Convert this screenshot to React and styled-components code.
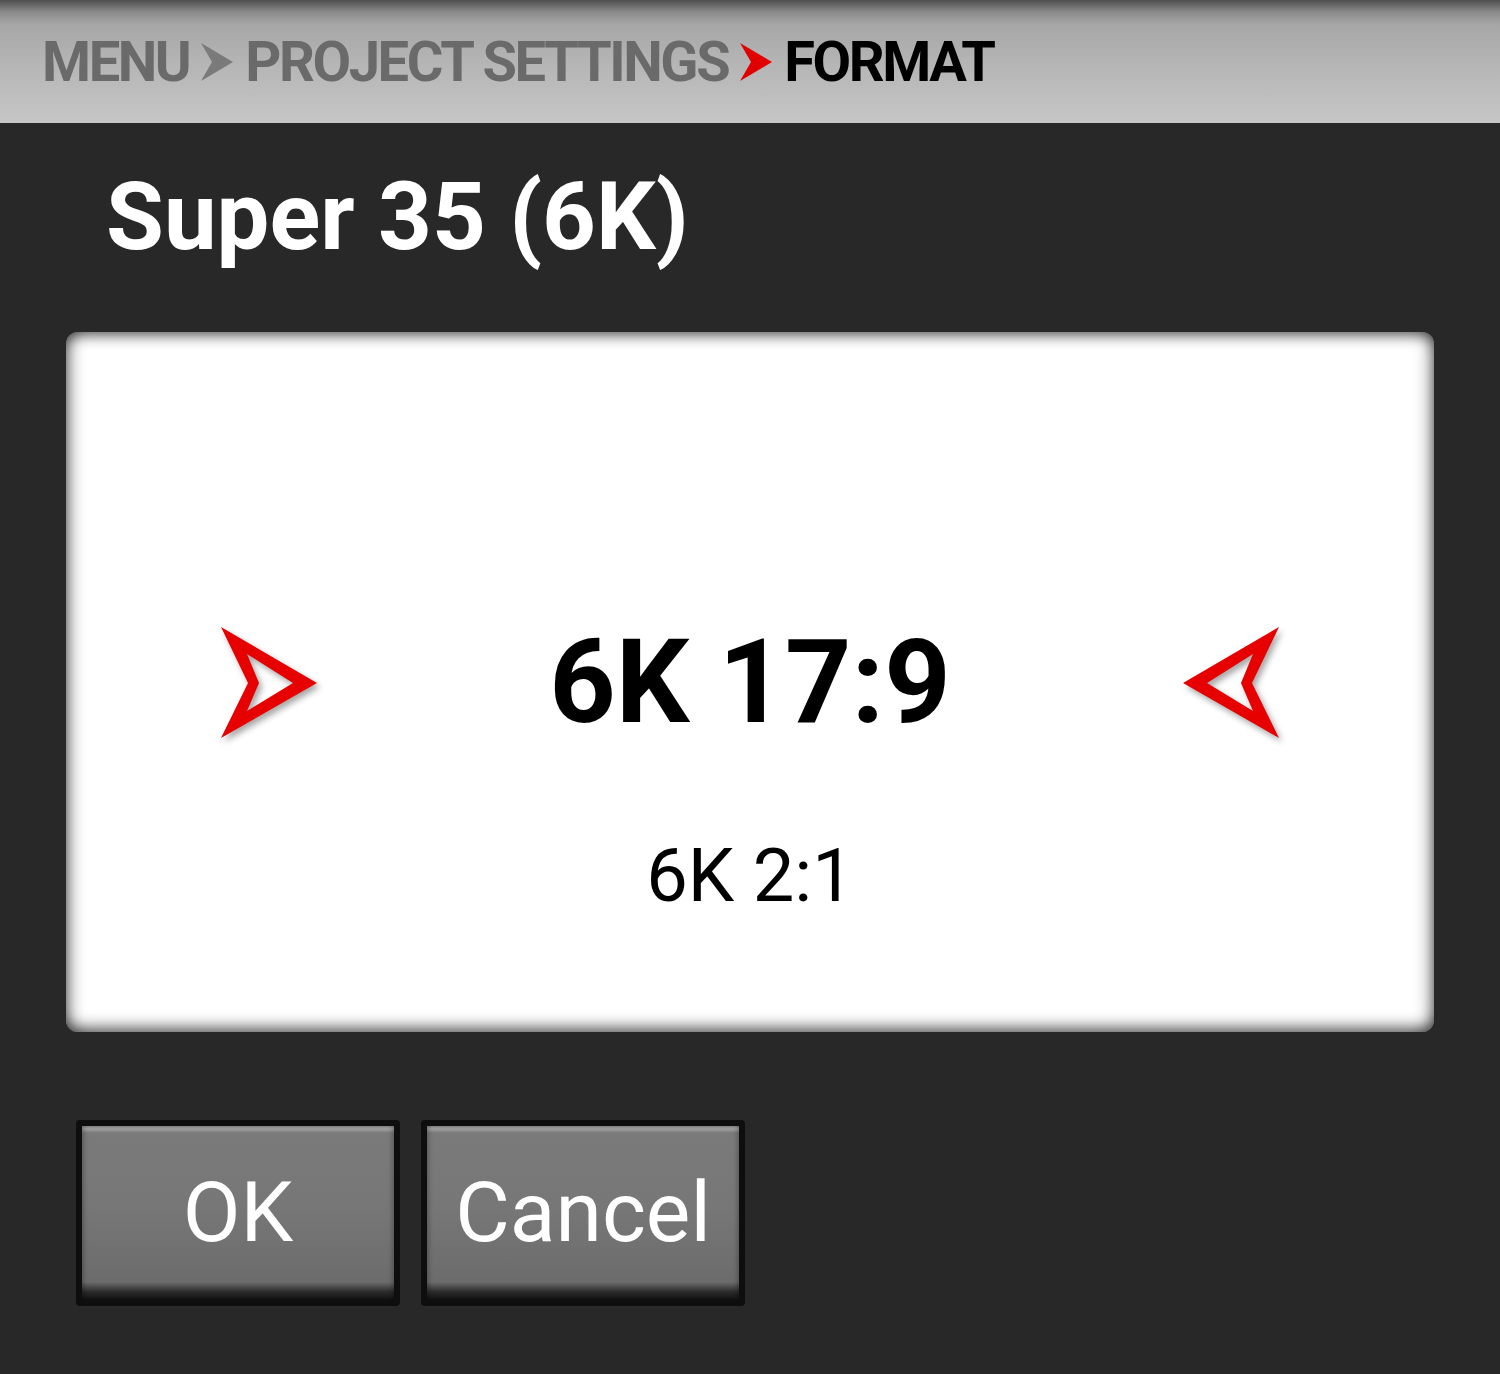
import styled, { createGlobalStyle } from "styled-components";

const GlobalStyle = createGlobalStyle`
    html, body {
        margin: 0;
        padding: 0;
        background: #282828;
    }

    body {
        font-family: Roboto, "Liberation Sans", sans-serif;
    }
`;

const Screen = styled.div`
    width: 1500px;
    height: 1374px;
    background: #282828;
    display: flex;
    flex-direction: column;
    overflow: hidden;
`;

const Header = styled.div`
    height: 123px;
    display: flex;
    align-items: center;
    padding: 0 0 0 42px;
    gap: 12px;
    box-sizing: border-box;
    background: linear-gradient(
        to bottom,
        #4e4e4e 0px,
        #8a8a8a 12px,
        #a6a6a6 24px,
        #b4b4b4 60px,
        #c6c6c6 123px
    );
`;

const Crumb = styled.span`
    font-size: 56px;
    font-weight: 700;
    letter-spacing: -2.4px;
    color: ${(p) => (p.$active ? "#000" : "#6a6a6a")};
    line-height: 1;
`;

const Chevron = styled.svg`
    width: 32px;
    height: 38px;
    flex-shrink: 0;
`;

const Title = styled.h1`
    margin: 0;
    padding: 40px 0 0 106px;
    height: 209px;
    box-sizing: border-box;
    font-size: 94px;
    font-weight: 700;
    color: #fff;
    line-height: 1.15;
`;

const Picker = styled.div`
    margin: 0 66px;
    height: 700px;
    background: #fff;
    border-radius: 12px;
    box-shadow:
        inset 0 10px 14px -6px rgba(0, 0, 0, 0.55),
        inset 0 -12px 14px -6px rgba(0, 0, 0, 0.5),
        inset 12px 0 16px -8px rgba(0, 0, 0, 0.45),
        inset -12px 0 16px -8px rgba(0, 0, 0, 0.45);
    display: grid;
    grid-template-columns: 154px 98px 1fr 98px 154px;
    grid-template-rows: 294px 113px 1fr;
`;

const ArrowCell = styled.div`
    grid-row: 2;
    grid-column: ${(p) => p.$col};
    display: flex;
    align-items: center;
    justify-content: center;
`;

const Arrow = styled.svg`
    width: 98px;
    height: 113px;
    filter: drop-shadow(3px 4px 3px rgba(0, 0, 0, 0.35));
`;

const Values = styled.div`
    grid-row: 2 / 4;
    grid-column: 3;
    display: flex;
    flex-direction: column;
    align-items: center;
`;

const Current = styled.div`
    font-size: 116px;
    font-weight: 700;
    color: #000;
    line-height: 113px;
`;

const Next = styled.div`
    font-size: 74px;
    font-weight: 400;
    color: #000;
    line-height: 1;
    margin-top: 100px;
`;

const Buttons = styled.div`
    display: flex;
    gap: 21px;
    padding: 88px 0 0 76px;
`;

const Button = styled.button`
    width: 324px;
    height: 186px;
    box-sizing: border-box;
    border: 6px solid #0e0e0e;
    border-radius: 4px;
    padding: 0;
    background: linear-gradient(
        to bottom,
        #8a8a8a 0px,
        #a0a0a0 3px,
        #7a7a7a 7px,
        #777777 45%,
        #6c6c6c 156px,
        #2a2a2a 166px,
        #111111 174px
    );
    box-shadow:
        inset 4px 0 4px -2px rgba(0, 0, 0, 0.25),
        inset -4px 0 4px -2px rgba(0, 0, 0, 0.25);
    color: #fff;
    font-family: Roboto, "Liberation Sans", sans-serif;
    font-size: 84px;
    font-weight: 400;
    line-height: 1;
    display: flex;
    align-items: center;
    justify-content: center;
    cursor: pointer;
`;

const Chev = ({ color }) => (
    <Chevron viewBox="0 0 32 38">
        <polygon points="0,0 32,19 0,38 11,19" fill={color} />
    </Chevron>
);

const PointRight = () => (
    <Arrow viewBox="0 0 98 113">
        <path
            d="M1 1 L97 57 L1 112 L28 57 Z M27 28 L39 57 L27 85 L73 57 Z"
            fill="#e60000"
            fillRule="evenodd"
        />
    </Arrow>
);

const PointLeft = () => (
    <Arrow viewBox="0 0 98 113">
        <path
            d="M97 1 L1 57 L97 112 L70 57 Z M71 28 L59 57 L71 85 L25 57 Z"
            fill="#e60000"
            fillRule="evenodd"
        />
    </Arrow>
);

const App = () => (
    <Screen>
        <GlobalStyle />
        <Header>
            <Crumb>MENU</Crumb>
            <Chev color="#7a7a7a" />
            <Crumb>PROJECT SETTINGS</Crumb>
            <Chev color="#e00000" />
            <Crumb $active>FORMAT</Crumb>
        </Header>
        <Title>Super 35 (6K)</Title>
        <Picker>
            <ArrowCell $col={2}>
                <PointRight />
            </ArrowCell>
            <Values>
                <Current>6K 17:9</Current>
                <Next>6K 2:1</Next>
            </Values>
            <ArrowCell $col={4}>
                <PointLeft />
            </ArrowCell>
        </Picker>
        <Buttons>
            <Button>OK</Button>
            <Button>Cancel</Button>
        </Buttons>
    </Screen>
);

export default App;
